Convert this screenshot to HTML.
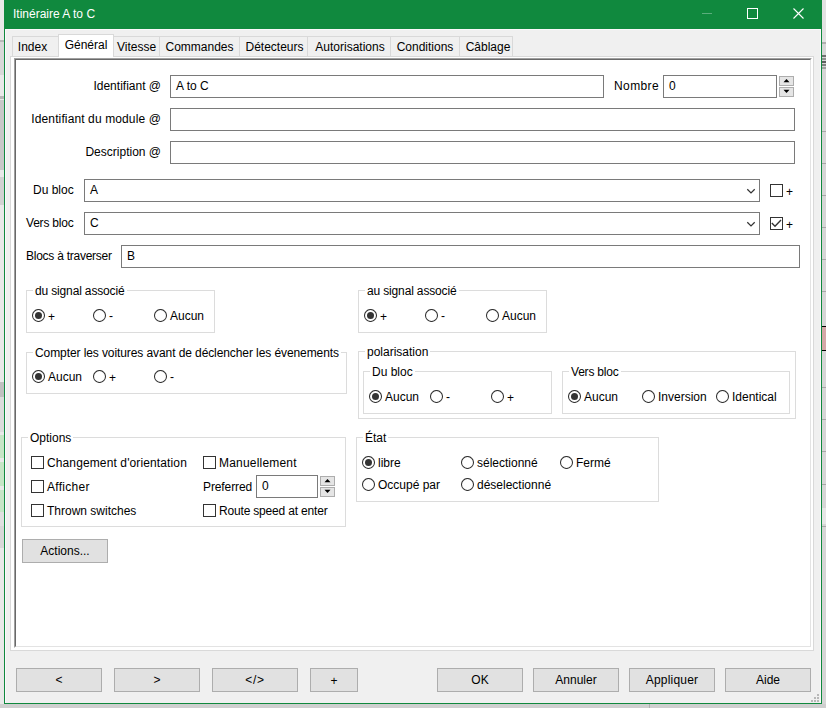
<!DOCTYPE html>
<html><head><meta charset="utf-8"><style>
html,body{margin:0;padding:0}
body{width:826px;height:708px;position:relative;overflow:hidden;background:#d6d6d6;font-family:"Liberation Sans",sans-serif;font-size:12px;color:#000}
.t{position:absolute;line-height:16px;white-space:nowrap}
.b{position:absolute;box-sizing:border-box}
.tb{border:1px solid #7a7a7a;background:#fff}
.btn{border:1px solid #adadad;background:#e1e1e1}
.gb{border:1px solid #dcdcdc}
.gt{background:#fff;padding:0 2px}
.rd{position:absolute}
.cb{position:absolute;width:13px;height:13px;box-sizing:border-box;border:1px solid #333;background:#fff}
.cb svg{position:absolute;left:0;top:0}
.sp{position:absolute;box-sizing:border-box;border:1px solid #adadad;background:#e5e5e5}
.tab{position:absolute;box-sizing:border-box;border:1px solid #d9d9d9;border-bottom:none;background:#f0f0f0}
</style></head><body>

<div class="b" style="left:0;top:0;width:4px;height:708px;background:#e9e9e9"></div>
<div class="b" style="left:0;top:40px;width:4px;height:2px;background:#b8b8b8"></div>
<div class="b" style="left:0;top:42px;width:4px;height:33px;background:#d8d8d8"></div>
<div class="b" style="left:0;top:96px;width:4px;height:3px;background:#b8b8b8"></div>
<div class="b" style="left:0;top:100px;width:4px;height:70px;background:#c8c8c8"></div>
<div class="b" style="left:0;top:177px;width:4px;height:28px;background:#d2d2d2"></div>
<div class="b" style="left:0;top:382px;width:4px;height:15px;background:#c0c0c0"></div>
<div class="b" style="left:0;top:397px;width:4px;height:35px;background:#dcdcdc"></div>
<div class="b" style="left:0;top:435px;width:4px;height:23px;background:#c6e6c6"></div>
<div class="b" style="left:0;top:462px;width:4px;height:24px;background:#c6e6c6"></div>
<div class="b" style="left:0;top:490px;width:4px;height:22px;background:#c6e6c6"></div>
<div class="b" style="left:0;top:512px;width:4px;height:14px;background:#e0e0e0"></div>
<div class="b" style="left:0;top:526px;width:4px;height:22px;background:#d8d8d8"></div>
<div class="b" style="left:822px;top:0;width:4px;height:708px;background:#d6d6d6"></div>
<div class="b" style="left:822px;top:0;width:4px;height:42px;background:#e2e2e2"></div>
<div class="b" style="left:822px;top:42px;width:4px;height:2px;background:#b0b0b0"></div>
<div class="b" style="left:822px;top:55px;width:4px;height:2px;background:#707070"></div>
<div class="b" style="left:822px;top:58px;width:4px;height:2px;background:#909090"></div>
<div class="b" style="left:822px;top:61px;width:4px;height:2px;background:#606060"></div>
<div class="b" style="left:822px;top:64px;width:4px;height:2px;background:#808080"></div>
<div class="b" style="left:822px;top:67px;width:4px;height:2px;background:#a0a0a0"></div>
<div class="b" style="left:822px;top:131px;width:4px;height:1px;background:#a8a8a8"></div>
<div class="b" style="left:822px;top:163px;width:4px;height:1px;background:#a8a8a8"></div>
<div class="b" style="left:822px;top:195px;width:4px;height:1px;background:#a8a8a8"></div>
<div class="b" style="left:822px;top:227px;width:4px;height:1px;background:#a8a8a8"></div>
<div class="b" style="left:822px;top:259px;width:4px;height:1px;background:#a8a8a8"></div>
<div class="b" style="left:822px;top:291px;width:4px;height:1px;background:#a8a8a8"></div>
<div class="b" style="left:822px;top:387px;width:4px;height:1px;background:#a8a8a8"></div>
<div class="b" style="left:822px;top:419px;width:4px;height:1px;background:#a8a8a8"></div>
<div class="b" style="left:822px;top:451px;width:4px;height:1px;background:#a8a8a8"></div>
<div class="b" style="left:822px;top:484px;width:4px;height:1px;background:#a8a8a8"></div>
<div class="b" style="left:822px;top:526px;width:4px;height:1px;background:#a8a8a8"></div>
<div class="b" style="left:822px;top:326px;width:4px;height:25px;background:#d4a8a8;border-top:1px solid #000;border-bottom:1px solid #000"></div>
<div class="b" style="left:822px;top:508px;width:4px;height:16px;background:#e6e6e6"></div>
<div class="b" style="left:0;top:704px;width:826px;height:4px;background:#cfcfcf"></div>
<div class="b" style="left:649px;top:704px;width:1px;height:4px;background:#b0b0b0"></div>
<div class="b" style="left:4px;top:0;width:818px;height:704px;background:#10893e"></div>
<div class="b" style="left:5px;top:29px;width:816px;height:674px;background:#fcf8fc"></div>
<div class="b" style="left:6px;top:30px;width:814px;height:673px;background:#f0f0f0"></div>
<div class="t" style="left:13px;top:6px;color:#fff">Itinéraire A to C</div>
<div class="b" style="left:702px;top:13px;width:10px;height:1px;background:#5aae7c"></div>
<div class="b" style="left:747px;top:8px;width:11px;height:11px;border:1px solid #fff"></div>
<svg style="position:absolute;left:792px;top:7px" width="13" height="13" viewBox="0 0 13 13"><path d="M1.5 1.5 L11.5 11.5 M11.5 1.5 L1.5 11.5" stroke="#fff" stroke-width="1.1"/></svg>
<div class="b" style="left:10px;top:56px;width:804px;height:595px;border:1px solid #d9d9d9;background:#fff"></div>
<div class="b" style="left:14px;top:58px;width:798px;height:590px;border-top:1px solid #a0a0a0;border-left:1px solid #a0a0a0;border-right:1px solid #fff;border-bottom:1px solid #fff"></div>
<div class="b" style="left:15px;top:59px;width:796px;height:588px;border-top:1px solid #696969;border-left:1px solid #696969;border-right:1px solid #e3e3e3;border-bottom:1px solid #e3e3e3"></div>
<div class="tab" style="left:12px;top:36px;width:47px;height:21px;border-bottom:1px solid #d9d9d9"></div>
<div class="t" style="left:9px;width:47px;text-align:center;top:39px;">Index</div>
<div class="tab" style="left:113px;top:36px;width:47px;height:21px;border-bottom:1px solid #d9d9d9"></div>
<div class="t" style="left:113px;width:47px;text-align:center;top:39px;">Vitesse</div>
<div class="tab" style="left:159px;top:36px;width:81px;height:21px;border-bottom:1px solid #d9d9d9"></div>
<div class="t" style="left:159px;width:81px;text-align:center;top:39px;">Commandes</div>
<div class="tab" style="left:239px;top:36px;width:69px;height:21px;border-bottom:1px solid #d9d9d9"></div>
<div class="t" style="left:240px;width:69px;text-align:center;top:39px;">Détecteurs</div>
<div class="tab" style="left:307px;top:36px;width:84px;height:21px;border-bottom:1px solid #d9d9d9"></div>
<div class="t" style="left:308px;width:84px;text-align:center;top:39px;">Autorisations</div>
<div class="tab" style="left:390px;top:36px;width:70px;height:21px;border-bottom:1px solid #d9d9d9"></div>
<div class="t" style="left:390px;width:70px;text-align:center;top:39px;">Conditions</div>
<div class="tab" style="left:459px;top:36px;width:54px;height:21px;border-bottom:1px solid #d9d9d9"></div>
<div class="t" style="left:461px;width:54px;text-align:center;top:39px;">Câblage</div>
<div class="tab" style="left:58px;top:34px;width:56px;height:23px;background:#fff"></div>
<div class="b" style="left:59px;top:56px;width:54px;height:2px;background:#fff"></div>
<div class="t" style="left:58px;width:56px;text-align:center;top:37px;">Général</div>
<div class="t" style="right:665px;top:78px;">Identifiant @</div>
<div class="b tb" style="left:170px;top:75px;width:434px;height:23px;"></div>
<div class="t" style="left:176px;top:78px;">A to C</div>
<div class="t" style="left:614px;top:78px;letter-spacing:0.4px;">Nombre</div>
<div class="b tb" style="left:663px;top:75px;width:114px;height:23px;"></div>
<div class="t" style="left:669px;top:78px;">0</div>
<div class="sp" style="left:779px;top:76px;width:15px;height:10px"><svg width="13" height="8" style="position:absolute;left:0;top:0"><path d="M3.5 5.2 L6.5 2 L9.5 5.2 Z" fill="#000"/></svg></div>
<div class="sp" style="left:779px;top:87px;width:15px;height:10px"><svg width="13" height="8" style="position:absolute;left:0;top:0"><path d="M3.5 1.8 L6.5 5 L9.5 1.8 Z" fill="#000"/></svg></div>
<div class="t" style="right:665px;top:111px;letter-spacing:0.12px;">Identifiant du module @</div>
<div class="b tb" style="left:170px;top:108px;width:625px;height:23px;"></div>
<div class="t" style="right:665px;top:144px;">Description @</div>
<div class="b tb" style="left:170px;top:141px;width:625px;height:23px;"></div>
<div class="t" style="left:33px;top:182px;">Du bloc</div>
<div class="b tb" style="left:84px;top:179px;width:676px;height:23px;"></div>
<div class="t" style="left:90px;top:182px;">A</div>
<svg style="position:absolute;left:746px;top:188px" width="10" height="6" viewBox="0 0 10 6"><path d="M1.3 1.2 L5 4.9 L8.7 1.2" fill="none" stroke="#333" stroke-width="1.25"/></svg>
<div class="cb" style="left:770px;top:184px"></div>
<div class="t" style="left:786px;top:184px;">+</div>
<div class="t" style="left:26px;top:215px;letter-spacing:-0.2px;">Vers bloc</div>
<div class="b tb" style="left:84px;top:212px;width:676px;height:23px;"></div>
<div class="t" style="left:90px;top:215px;">C</div>
<svg style="position:absolute;left:746px;top:221px" width="10" height="6" viewBox="0 0 10 6"><path d="M1.3 1.2 L5 4.9 L8.7 1.2" fill="none" stroke="#333" stroke-width="1.25"/></svg>
<div class="cb" style="left:770px;top:217px"><svg width="11" height="11" viewBox="0 0 11 11"><path d="M0.8 5 L4 8.2 L10 2" fill="none" stroke="#333" stroke-width="1.4"/></svg></div>
<div class="t" style="left:786px;top:217px;">+</div>
<div class="t" style="left:26px;top:248px;letter-spacing:-0.25px;">Blocs à traverser</div>
<div class="b tb" style="left:121px;top:245px;width:679px;height:23px;"></div>
<div class="t" style="left:127px;top:248px;">B</div>
<div class="b gb" style="left:26px;top:290px;width:189px;height:43px;"></div>
<div class="t gt" style="left:33px;top:283px;letter-spacing:-0.15px;">du signal associé</div>
<svg class="rd" style="left:32px;top:309px" width="13" height="13" viewBox="0 0 13 13"><circle cx="6.5" cy="6.5" r="6" fill="#fff" stroke="#333" stroke-width="1.05"/><circle cx="6.5" cy="6.5" r="3.5" fill="#333"/></svg>
<div class="t" style="left:48px;top:309px;">+</div>
<svg class="rd" style="left:93px;top:309px" width="13" height="13" viewBox="0 0 13 13"><circle cx="6.5" cy="6.5" r="6" fill="#fff" stroke="#333" stroke-width="1.05"/></svg>
<div class="t" style="left:109px;top:308px;">-</div>
<svg class="rd" style="left:154px;top:309px" width="13" height="13" viewBox="0 0 13 13"><circle cx="6.5" cy="6.5" r="6" fill="#fff" stroke="#333" stroke-width="1.05"/></svg>
<div class="t" style="left:170px;top:308px;">Aucun</div>
<div class="b gb" style="left:358px;top:290px;width:189px;height:43px;"></div>
<div class="t gt" style="left:365px;top:283px;letter-spacing:-0.15px;">au signal associé</div>
<svg class="rd" style="left:364px;top:309px" width="13" height="13" viewBox="0 0 13 13"><circle cx="6.5" cy="6.5" r="6" fill="#fff" stroke="#333" stroke-width="1.05"/><circle cx="6.5" cy="6.5" r="3.5" fill="#333"/></svg>
<div class="t" style="left:380px;top:309px;">+</div>
<svg class="rd" style="left:425px;top:309px" width="13" height="13" viewBox="0 0 13 13"><circle cx="6.5" cy="6.5" r="6" fill="#fff" stroke="#333" stroke-width="1.05"/></svg>
<div class="t" style="left:441px;top:308px;">-</div>
<svg class="rd" style="left:486px;top:309px" width="13" height="13" viewBox="0 0 13 13"><circle cx="6.5" cy="6.5" r="6" fill="#fff" stroke="#333" stroke-width="1.05"/></svg>
<div class="t" style="left:502px;top:308px;">Aucun</div>
<div class="b gb" style="left:26px;top:352px;width:321px;height:42px;"></div>
<div class="t gt" style="left:33px;top:345px;letter-spacing:-0.09px;">Compter les voitures avant de déclencher les évenements</div>
<svg class="rd" style="left:32px;top:370px" width="13" height="13" viewBox="0 0 13 13"><circle cx="6.5" cy="6.5" r="6" fill="#fff" stroke="#333" stroke-width="1.05"/><circle cx="6.5" cy="6.5" r="3.5" fill="#333"/></svg>
<div class="t" style="left:48px;top:369px;">Aucun</div>
<svg class="rd" style="left:93px;top:370px" width="13" height="13" viewBox="0 0 13 13"><circle cx="6.5" cy="6.5" r="6" fill="#fff" stroke="#333" stroke-width="1.05"/></svg>
<div class="t" style="left:109px;top:370px;">+</div>
<svg class="rd" style="left:154px;top:370px" width="13" height="13" viewBox="0 0 13 13"><circle cx="6.5" cy="6.5" r="6" fill="#fff" stroke="#333" stroke-width="1.05"/></svg>
<div class="t" style="left:170px;top:369px;">-</div>
<div class="b gb" style="left:358px;top:351px;width:438px;height:68px;"></div>
<div class="t gt" style="left:365px;top:344px;">polarisation</div>
<div class="b gb" style="left:363px;top:371px;width:189px;height:43px;"></div>
<div class="t gt" style="left:370px;top:364px;">Du bloc</div>
<svg class="rd" style="left:369px;top:390px" width="13" height="13" viewBox="0 0 13 13"><circle cx="6.5" cy="6.5" r="6" fill="#fff" stroke="#333" stroke-width="1.05"/><circle cx="6.5" cy="6.5" r="3.5" fill="#333"/></svg>
<div class="t" style="left:385px;top:389px;">Aucun</div>
<svg class="rd" style="left:430px;top:390px" width="13" height="13" viewBox="0 0 13 13"><circle cx="6.5" cy="6.5" r="6" fill="#fff" stroke="#333" stroke-width="1.05"/></svg>
<div class="t" style="left:446px;top:389px;">-</div>
<svg class="rd" style="left:491px;top:390px" width="13" height="13" viewBox="0 0 13 13"><circle cx="6.5" cy="6.5" r="6" fill="#fff" stroke="#333" stroke-width="1.05"/></svg>
<div class="t" style="left:507px;top:390px;">+</div>
<div class="b gb" style="left:562px;top:371px;width:228px;height:43px;"></div>
<div class="t gt" style="left:569px;top:364px;letter-spacing:-0.2px;">Vers bloc</div>
<svg class="rd" style="left:568px;top:390px" width="13" height="13" viewBox="0 0 13 13"><circle cx="6.5" cy="6.5" r="6" fill="#fff" stroke="#333" stroke-width="1.05"/><circle cx="6.5" cy="6.5" r="3.5" fill="#333"/></svg>
<div class="t" style="left:584px;top:389px;">Aucun</div>
<svg class="rd" style="left:642px;top:390px" width="13" height="13" viewBox="0 0 13 13"><circle cx="6.5" cy="6.5" r="6" fill="#fff" stroke="#333" stroke-width="1.05"/></svg>
<div class="t" style="left:658px;top:389px;">Inversion</div>
<svg class="rd" style="left:716px;top:390px" width="13" height="13" viewBox="0 0 13 13"><circle cx="6.5" cy="6.5" r="6" fill="#fff" stroke="#333" stroke-width="1.05"/></svg>
<div class="t" style="left:732px;top:389px;">Identical</div>
<div class="b gb" style="left:21px;top:437px;width:325px;height:90px;"></div>
<div class="t gt" style="left:28px;top:430px;">Options</div>
<div class="cb" style="left:31px;top:456px"></div>
<div class="t" style="left:47px;top:455px;letter-spacing:0.12px;">Changement d'orientation</div>
<div class="cb" style="left:31px;top:480px"></div>
<div class="t" style="left:47px;top:479px;letter-spacing:0.3px;">Afficher</div>
<div class="cb" style="left:31px;top:504px"></div>
<div class="t" style="left:47px;top:503px;">Thrown switches</div>
<div class="cb" style="left:203px;top:456px"></div>
<div class="t" style="left:219px;top:455px;letter-spacing:0.2px;">Manuellement</div>
<div class="t" style="left:203px;top:479px;letter-spacing:-0.1px;">Preferred</div>
<div class="b tb" style="left:256px;top:475px;width:62px;height:23px;"></div>
<div class="t" style="left:262px;top:478px;">0</div>
<div class="sp" style="left:320px;top:476px;width:15px;height:10px"><svg width="13" height="8" style="position:absolute;left:0;top:0"><path d="M3.5 5.2 L6.5 2 L9.5 5.2 Z" fill="#000"/></svg></div>
<div class="sp" style="left:320px;top:487px;width:15px;height:10px"><svg width="13" height="8" style="position:absolute;left:0;top:0"><path d="M3.5 1.8 L6.5 5 L9.5 1.8 Z" fill="#000"/></svg></div>
<div class="cb" style="left:203px;top:504px"></div>
<div class="t" style="left:219px;top:503px;letter-spacing:-0.18px;">Route speed at enter</div>
<div class="b gb" style="left:356px;top:437px;width:303px;height:65px;"></div>
<div class="t gt" style="left:363px;top:430px;">État</div>
<svg class="rd" style="left:362px;top:456px" width="13" height="13" viewBox="0 0 13 13"><circle cx="6.5" cy="6.5" r="6" fill="#fff" stroke="#333" stroke-width="1.05"/><circle cx="6.5" cy="6.5" r="3.5" fill="#333"/></svg>
<div class="t" style="left:378px;top:455px;">libre</div>
<svg class="rd" style="left:461px;top:456px" width="13" height="13" viewBox="0 0 13 13"><circle cx="6.5" cy="6.5" r="6" fill="#fff" stroke="#333" stroke-width="1.05"/></svg>
<div class="t" style="left:477px;top:455px;">sélectionné</div>
<svg class="rd" style="left:560px;top:456px" width="13" height="13" viewBox="0 0 13 13"><circle cx="6.5" cy="6.5" r="6" fill="#fff" stroke="#333" stroke-width="1.05"/></svg>
<div class="t" style="left:576px;top:455px;">Fermé</div>
<svg class="rd" style="left:362px;top:478px" width="13" height="13" viewBox="0 0 13 13"><circle cx="6.5" cy="6.5" r="6" fill="#fff" stroke="#333" stroke-width="1.05"/></svg>
<div class="t" style="left:378px;top:477px;">Occupé par</div>
<svg class="rd" style="left:461px;top:478px" width="13" height="13" viewBox="0 0 13 13"><circle cx="6.5" cy="6.5" r="6" fill="#fff" stroke="#333" stroke-width="1.05"/></svg>
<div class="t" style="left:477px;top:477px;">déselectionné</div>
<div class="b btn" style="left:22px;top:539px;width:86px;height:24px;"></div>
<div class="t" style="left:22px;width:86px;text-align:center;top:543px;">Actions...</div>
<div class="b btn" style="left:16px;top:668px;width:86px;height:24px;"></div>
<div class="t" style="left:16px;width:86px;text-align:center;top:672px;">&lt;</div>
<div class="b btn" style="left:114px;top:668px;width:86px;height:24px;"></div>
<div class="t" style="left:114px;width:86px;text-align:center;top:672px;">&gt;</div>
<div class="b btn" style="left:212px;top:668px;width:86px;height:24px;"></div>
<div class="t" style="left:212px;width:86px;text-align:center;top:672px;letter-spacing:0.8px;">&lt;/&gt;</div>
<div class="b btn" style="left:310px;top:668px;width:48px;height:24px;"></div>
<div class="t" style="left:310px;width:48px;text-align:center;top:673px;">+</div>
<div class="b btn" style="left:437px;top:668px;width:86px;height:24px;"></div>
<div class="t" style="left:437px;width:86px;text-align:center;top:672px;">OK</div>
<div class="b btn" style="left:533px;top:668px;width:86px;height:24px;"></div>
<div class="t" style="left:533px;width:86px;text-align:center;top:672px;">Annuler</div>
<div class="b btn" style="left:629px;top:668px;width:86px;height:24px;"></div>
<div class="t" style="left:629px;width:86px;text-align:center;top:672px;letter-spacing:0.2px;">Appliquer</div>
<div class="b btn" style="left:725px;top:668px;width:86px;height:24px;"></div>
<div class="t" style="left:725px;width:86px;text-align:center;top:672px;">Aide</div>
<div class="b" style="left:817px;top:694px;width:2px;height:2px;background:#b8b8b8"></div>
<div class="b" style="left:814px;top:697px;width:2px;height:2px;background:#b8b8b8"></div>
<div class="b" style="left:817px;top:697px;width:2px;height:2px;background:#b8b8b8"></div>
<div class="b" style="left:811px;top:700px;width:2px;height:2px;background:#b8b8b8"></div>
<div class="b" style="left:814px;top:700px;width:2px;height:2px;background:#b8b8b8"></div>
<div class="b" style="left:817px;top:700px;width:2px;height:2px;background:#b8b8b8"></div>
</body></html>
